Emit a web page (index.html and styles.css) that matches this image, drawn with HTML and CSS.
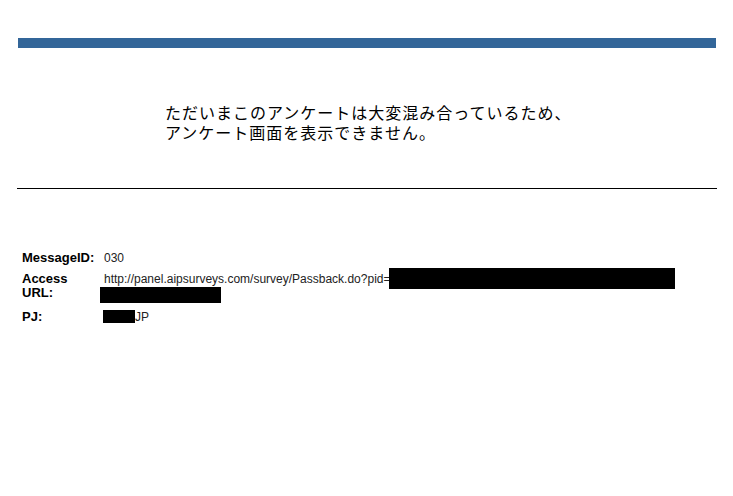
FILE: index.html
```html
<!DOCTYPE html>
<html lang="ja">
<head>
  <meta charset="UTF-8" />
  <title>アンケート</title>
  <link rel="stylesheet" href="styles.css">
</head>
<body>

  <div class="topbar"></div>

  <div class="notice">
    <p>ただいまこのアンケートは大変混み合っているため、<br>アンケート画面を表示できません。</p>
  </div>

  <hr class="rule">

  <div class="details">
    <div class="label">MessageID:</div>
    <div class="value">030</div>

    <div class="label">Access URL:</div>
    <div class="value">
      http://panel.aipsurveys.com/survey/Passback.do?pid=<span class="mask mask-pid"></span>
      <div class="mask mask-url"></div>
    </div>

    <div class="label">PJ:</div>
    <div class="value"><span class="mask mask-pj"></span>JP</div>
  </div>

</body>
</html>
```

FILE: styles.css
```css
body {
  margin: 0;
  padding: 0;
  background: #fff;
  color: #000;
  font-family: "Liberation Sans", Arial, sans-serif;
}

.topbar {
  height: 10px;
  margin: 38px 17px 0 18px;
  background: #336699;
}

.notice {
  padding: 54px 0 0 165px;
  font-family: "Noto Sans CJK JP", sans-serif;
  font-size: 16px;
  line-height: 20px;
  letter-spacing: 1px;
}

.notice p {
  margin: 0;
}

.rule {
  margin: 46px 16px 0 17px;
  border: none;
  border-top: 1px solid #000;
  height: 0;
}

.details {
  display: grid;
  grid-template-columns: 75px 1fr;
  column-gap: 7px;
  row-gap: 7px;
  margin-top: 62px;
  padding-left: 22px;
  font-size: 12px;
  line-height: 14px;
}

.label {
  font-weight: bold;
  font-size: 13px;
}

.value {
  color: #222;
}

.mask {
  background: #000;
}

.mask-pid {
  display: inline-block;
  width: 286px;
  height: 21px;
  margin: -4px 0 -6px -2px;
}

.mask-url {
  width: 121px;
  height: 16px;
  margin: 1px 0 0 -4px;
}

.mask-pj {
  display: inline-block;
  width: 32px;
  height: 13px;
  margin: 0 0 -2px -1px;
  vertical-align: baseline;
}
```
